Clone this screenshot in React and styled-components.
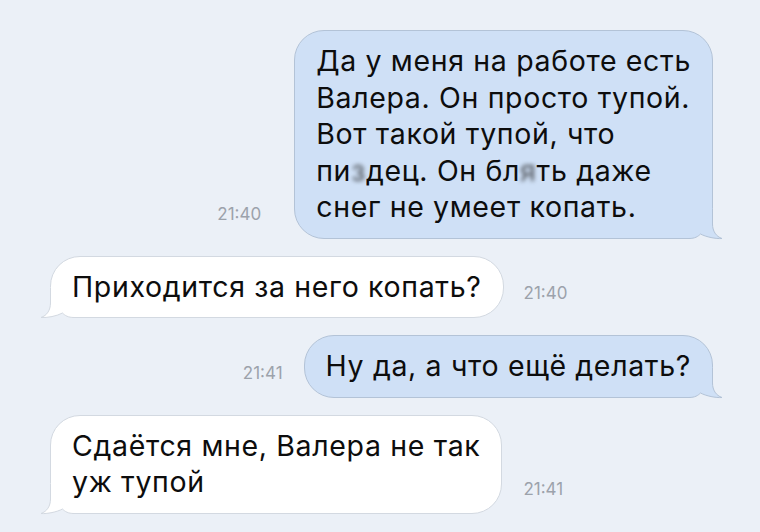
import React from 'react';
import styled, { createGlobalStyle } from 'styled-components';

const Global = createGlobalStyle`
  html, body { margin: 0; padding: 0; background: #ebf0f7; }
  body { width: 760px; height: 532px; overflow: hidden; }
`;

const Chat = styled.div`
  width: 760px;
  height: 532px;
  box-sizing: border-box;
  padding: 30px 47px 0 50px;
  display: flex;
  flex-direction: column;
  gap: 17px;
  background: #ebf0f7;
  font-family: Inter, "Liberation Sans", sans-serif;
`;

const Row = styled.div`
  display: flex;
  align-items: flex-end;
  justify-content: ${p => (p.$out ? 'flex-end' : 'flex-start')};
  gap: ${p => p.$gap}px;
`;

const Bubble = styled.div`
  position: relative;
  background: ${p => (p.$out ? '#cfe0f6' : '#ffffff')};
  border: 1px solid ${p => (p.$out ? '#b3c3d7' : '#d3d9e1')};
  border-radius: 30px;
  padding: 12px 21px;
  font-size: 28.5px;
  letter-spacing: 0.65px;
  line-height: 36.5px;
  color: #0d0d0d;
  white-space: nowrap;
`;

const Time = styled.span`
  font-size: 17px;
  line-height: 20px;
  color: #9ca2ab;
  margin-bottom: 15px;
  white-space: nowrap;
`;

const Blur = styled.span`
  display: inline-block;
  filter: blur(2px);
  color: #4a4e54;
`;

const TailSvg = styled.svg`
  position: absolute;
  bottom: -1px;
  width: 44px;
  height: 30px;
  overflow: visible;
  ${p => (p.$out ? 'right: -11px;' : 'left: -11px; transform: scaleX(-1);')}
`;

const tailPath =
  'M 33.5 0 L 33.5 15 C 33.5 22, 37 27.5, 43 29.5 C 37 30, 27 28, 21.5 25 C 19 27.5, 16 29.5, 10 29.5 L 0 29.5';

const tailFill = tailPath + ' L 3.5 26.5 A 27 27 0 0 0 30.5 -0.5 L 33.5 -0.5 Z';

function Tail({ out }) {
  const fill = out ? '#cfe0f6' : '#ffffff';
  const stroke = out ? '#b3c3d7' : '#d3d9e1';
  return (
    <TailSvg $out={out} viewBox="0 0 44 30">
      <path d={tailFill} fill={fill} />
      <path d={tailPath} fill="none" stroke={stroke} strokeWidth="1" />
    </TailSvg>
  );
}

function Message({ out, time, gap, children }) {
  const bubble = (
    <Bubble $out={out}>
      {children}
      <Tail out={out} />
    </Bubble>
  );
  const t = <Time>{time}</Time>;
  return (
    <Row $out={out} $gap={gap}>
      {out ? t : bubble}
      {out ? bubble : t}
    </Row>
  );
}

export default function App() {
  return (
    <>
      <Global />
      <Chat>
        <Message out time="21:40" gap={33}>
          Да у меня на работе есть
          <br />
          Валера. Он просто тупой.
          <br />
          Вот такой тупой, что
          <br />
          пи<Blur>з</Blur>дец. Он бл<Blur>я</Blur>ть даже
          <br />
          снег не умеет копать.
        </Message>
        <Message time="21:40" gap={20}>
          Приходится за него копать?
        </Message>
        <Message out time="21:41" gap={21}>
          Ну да, а что ещё делать?
        </Message>
        <Message time="21:41" gap={21}>
          Сдаётся мне, Валера не так
          <br />
          уж тупой
        </Message>
      </Chat>
    </>
  );
}
